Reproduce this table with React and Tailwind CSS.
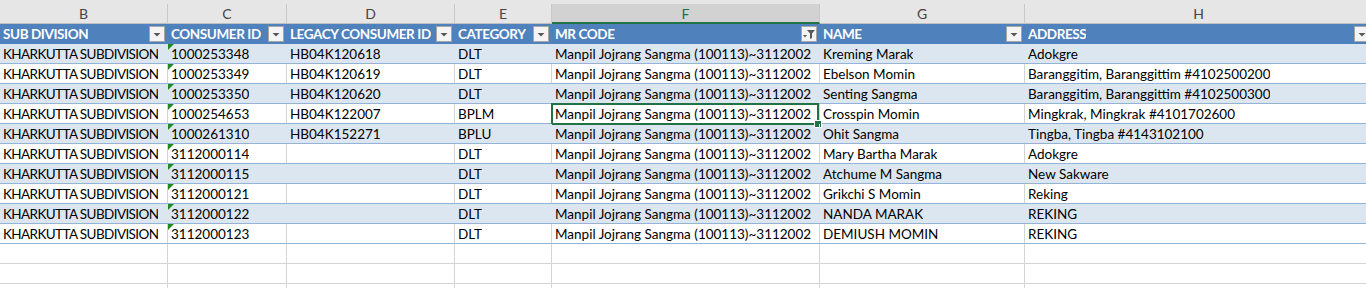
import React from 'react';

const cols = [
  { key: 'B', title: 'SUB DIVISION', w: 'w-[168px]' },
  { key: 'C', title: 'CONSUMER ID', w: 'w-[119px]' },
  { key: 'D', title: 'LEGACY CONSUMER ID', w: 'w-[168px]' },
  { key: 'E', title: 'CATEGORY', w: 'w-[97px]' },
  { key: 'F', title: 'MR CODE', w: 'w-[268px]' },
  { key: 'G', title: 'NAME', w: 'w-[205px]' },
  { key: 'H', title: 'ADDRESS', w: 'w-[348px]' },
];

const MR = 'Manpil Jojrang Sangma (100113)~3112002';
const SUB = 'KHARKUTTA SUBDIVISION';

const rows = [
  ['1000253348', 'HB04K120618', 'DLT', 'Kreming Marak', 'Adokgre'],
  ['1000253349', 'HB04K120619', 'DLT', 'Ebelson Momin', 'Baranggitim, Baranggittim #4102500200'],
  ['1000253350', 'HB04K120620', 'DLT', 'Senting Sangma', 'Baranggitim, Baranggittim #4102500300'],
  ['1000254653', 'HB04K122007', 'BPLM', 'Crosspin Momin', 'Mingkrak, Mingkrak #4101702600'],
  ['1000261310', 'HB04K152271', 'BPLU', 'Ohit Sangma', 'Tingba, Tingba #4143102100'],
  ['3112000114', '', 'DLT', 'Mary Bartha Marak', 'Adokgre'],
  ['3112000115', '', 'DLT', 'Atchume M Sangma', 'New Sakware'],
  ['3112000121', '', 'DLT', 'Grikchi S Momin', 'Reking'],
  ['3112000122', '', 'DLT', 'NANDA MARAK', 'REKING'],
  ['3112000123', '', 'DLT', 'DEMIUSH MOMIN', 'REKING'],
];

const DropBtn = ({ filtered }) => (
  <div className="w-[16px] h-[16px] mr-[1px] shrink-0 bg-[#f4f4f4] border border-[#a6a6a6] flex items-center justify-center">
    {filtered ? (
      <svg width="14" height="14" viewBox="0 0 14 14">
        <polygon points="5,3 13,3 10,6.5 10,11 8,12 8,6.5" fill="#595959" />
        <polygon points="1,8 5,8 3,10.5" fill="#595959" />
      </svg>
    ) : (
      <svg width="14" height="14" viewBox="0 0 14 14">
        <polygon points="3.5,6 10.5,6 7,9.5" fill="#595959" />
      </svg>
    )}
  </div>
);

export default function App() {
  return (
    <div
      className="w-[1366px] h-[288px] overflow-hidden bg-white text-[13.5px] text-black"
      style={{ fontFamily: 'Lato, "Open Sans", sans-serif' }}
    >
      {/* strip above the column letters */}
      <div className="h-[4px] bg-[#e6e6e6]" />

      {/* column letters */}
      <div className="flex h-[20px] text-[14px]">
        {cols.map((c) => (
          <div
            key={c.key}
            className={`${c.w} shrink-0 flex items-center justify-center border-r border-[#c8c8c8] ${
              c.key === 'F'
                ? 'bg-[#d2d2d2] text-[#217346] border-b-2 border-b-[#217346]'
                : 'bg-[#e6e6e6] text-[#444] border-b border-b-[#c0c0c0]'
            }`}
          >
            {c.key}
          </div>
        ))}
      </div>

      {/* table header */}
      <div className="flex h-[20px] bg-[#4f81bd] text-white font-bold">
        {cols.map((c) => (
          <div key={c.key} className={`${c.w} shrink-0 flex items-center justify-between pl-[3px] pr-[1px] border-r border-[#4f81bd]`}>
            <span className="whitespace-nowrap overflow-hidden tracking-[-0.4px] pt-[1px]">{c.title}</span>
            <DropBtn filtered={c.key === 'F'} />
          </div>
        ))}
      </div>

      {/* data */}
      {rows.map((r, i) => {
        const band = i % 2 === 0;
        const cells = [SUB, r[0], r[1], r[2], MR, r[3], r[4]];
        return (
          <div
            key={i}
            className={`flex h-[20px] border-b border-[#95b3d7] ${band ? 'bg-[#dce6f1]' : 'bg-white'}`}
          >
            {cells.map((v, j) => (
              <div
                key={j}
                className={`${cols[j].w} shrink-0 relative flex items-center pl-[3px] whitespace-nowrap border-r ${
                  band ? 'border-[#dce6f1]' : 'border-[#d4d4d4]'
                }`}
              >
                {j === 1 && (
                  <span className="absolute left-0 top-0 w-0 h-0 border-t-[6px] border-r-[6px] border-t-[#1e8a1e] border-r-transparent" />
                )}
                <span className={`leading-none pt-[3px] overflow-hidden ${j === 0 ? 'tracking-[-0.6px]' : ''}`}>{v}</span>
                {i === 3 && j === 4 && (
                  <div className="absolute -left-[1px] -top-[1px] right-0 -bottom-[2px] border-2 border-[#217346]">
                    <span className="absolute -right-[4px] -bottom-[4px] w-[6px] h-[6px] bg-[#217346] outline outline-1 outline-white" />
                  </div>
                )}
              </div>
            ))}
          </div>
        );
      })}

      {/* empty rows */}
      {[0, 1, 2].map((k) => (
        <div key={k} className="flex h-[20px] border-b border-[#d4d4d4]">
          {cols.map((c) => (
            <div key={c.key} className={`${c.w} shrink-0 border-r border-[#d4d4d4]`} />
          ))}
        </div>
      ))}
    </div>
  );
}
